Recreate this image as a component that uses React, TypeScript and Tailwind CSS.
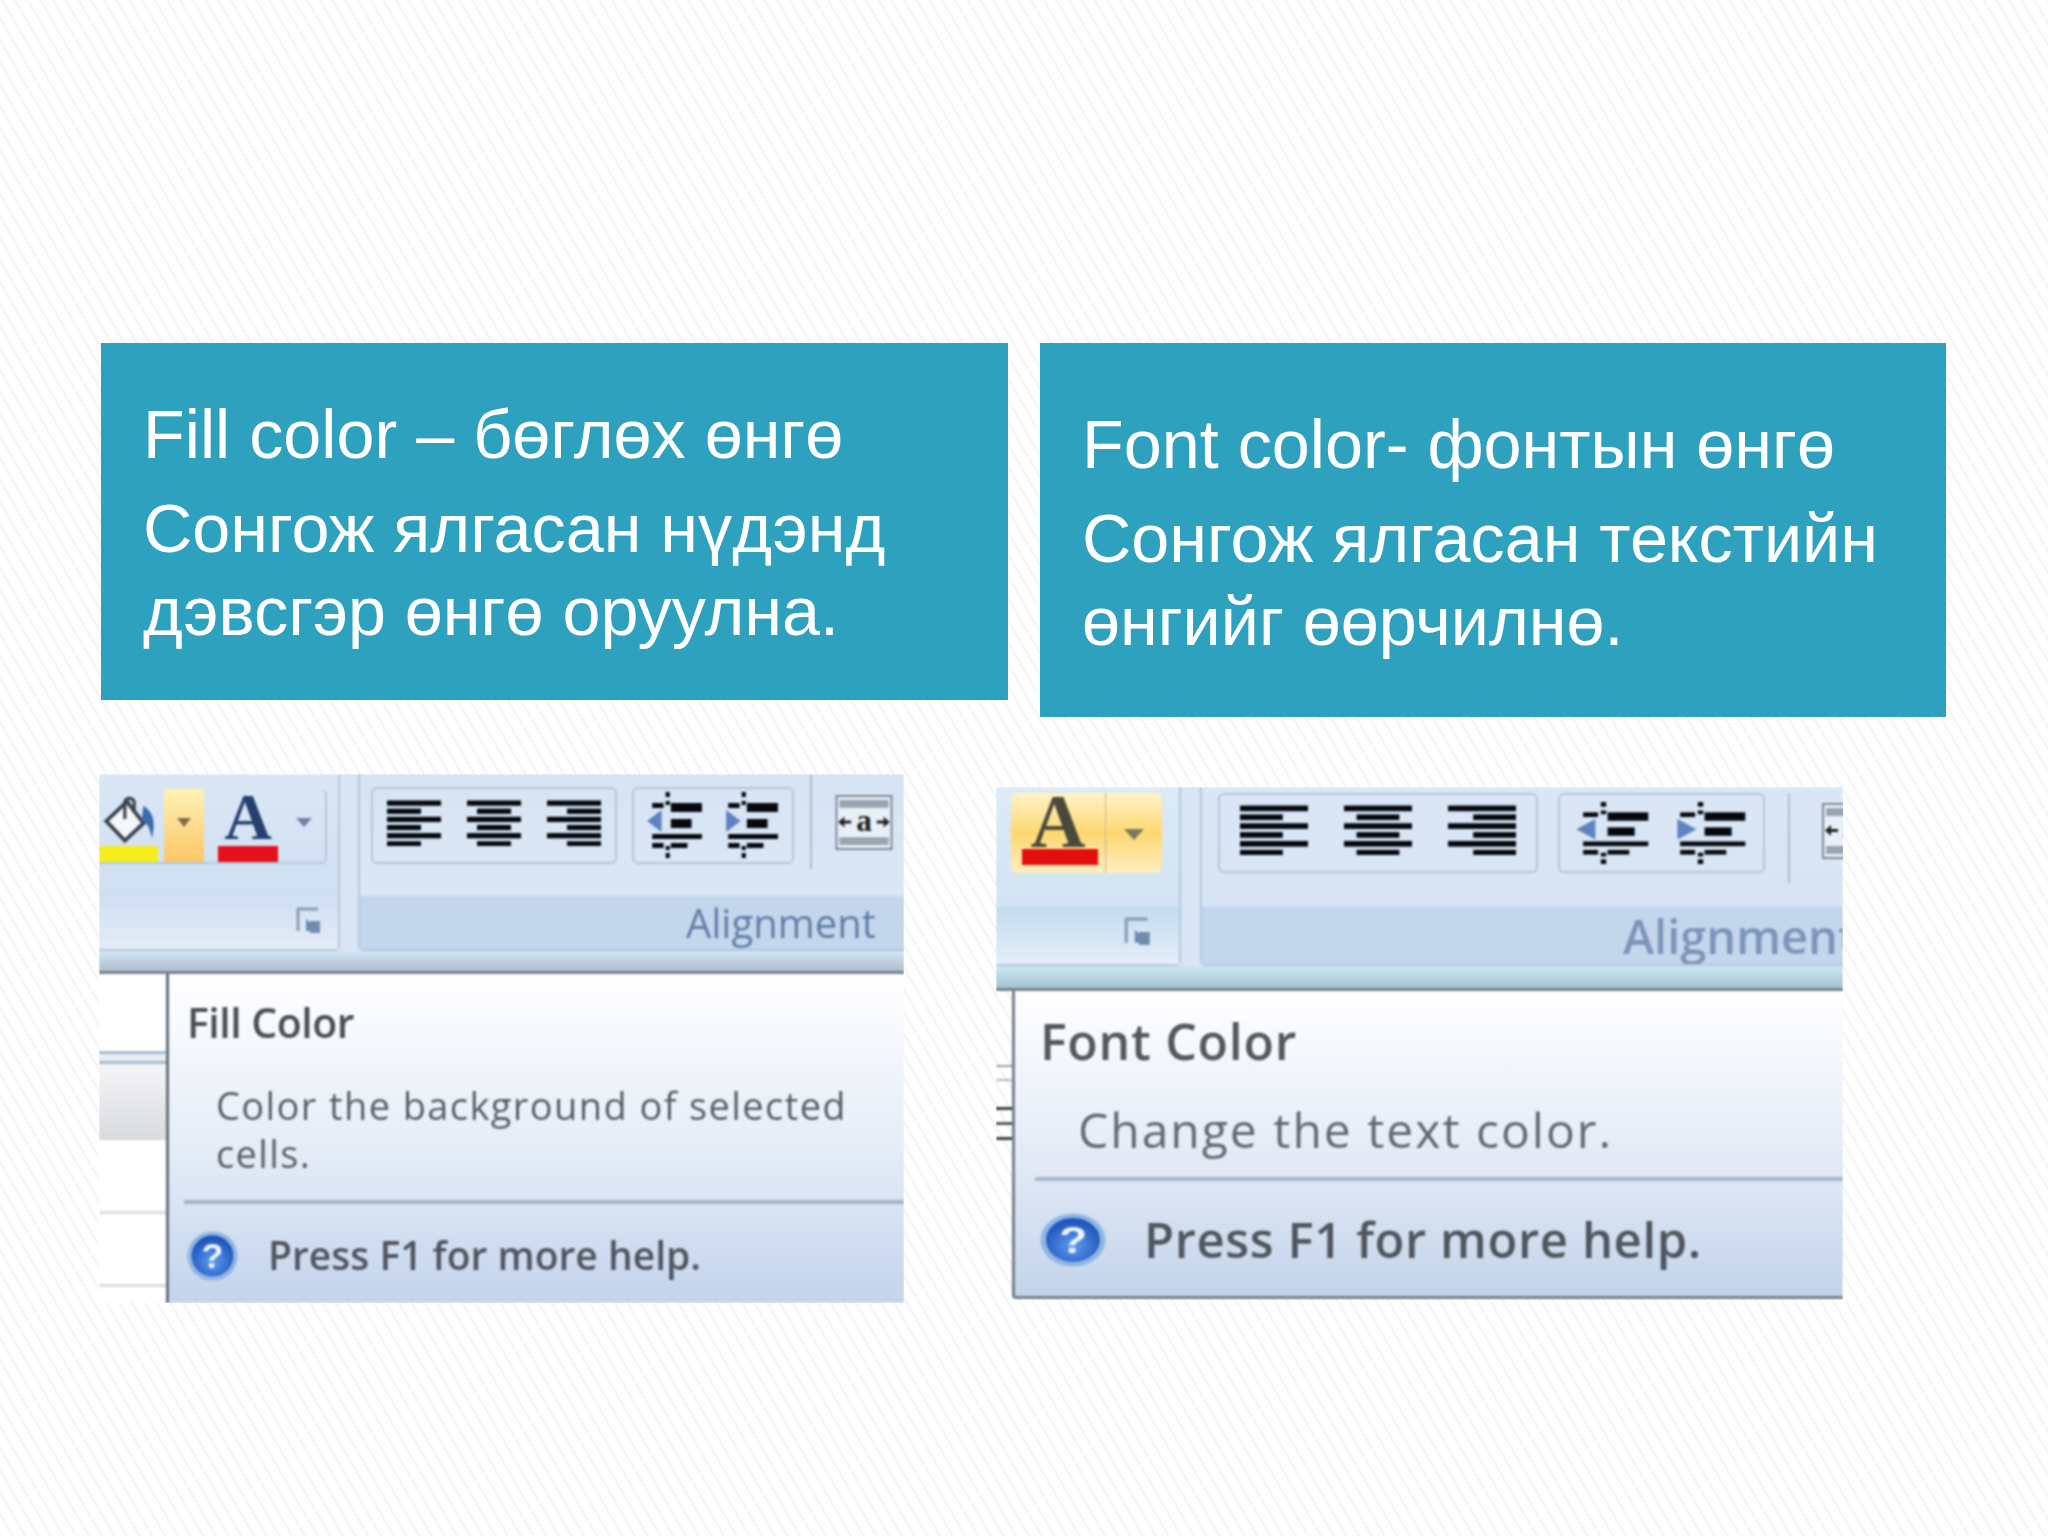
const sans = "font-['Liberation_Sans',Arial,sans-serif]";
const uiFont = "font-['Open_Sans','Noto_Sans',sans-serif]";

function AlignIcon({ kind, className }: { kind: "left" | "center" | "right"; className: string }) {
  const rows = [0, 1, 2, 3, 4, 5];
  return (
    <svg viewBox="0 0 54 48" preserveAspectRatio="none" className={className}>
      {rows.map((r) => {
        const w = r % 2 === 0 ? 54 : 34;
        const x = kind === "left" ? 0 : kind === "right" ? 54 - w : (54 - w) / 2;
        return <rect key={r} x={x} y={r * 8.5 + 0.5} width={w} height={5.5} fill="#05080f" />;
      })}
    </svg>
  );
}

function IndentIcon({ dir, className }: { dir: "in" | "out"; className: string }) {
  return (
    <svg viewBox="0 0 56 66" preserveAspectRatio="none" className={className}>
      <rect x="19" y="0" width="4" height="5" fill="#05080f" />
      <rect x="19" y="9" width="4" height="4" fill="#05080f" />
      <rect x="19" y="54" width="4" height="4" fill="#05080f" />
      <rect x="19" y="61" width="4" height="5" fill="#05080f" />
      <rect x="6" y="11" width="11" height="5" fill="#05080f" />
      <rect x="24" y="11" width="30" height="9" fill="#05080f" />
      <rect x="24" y="27" width="20" height="9" fill="#05080f" />
      <rect x="6" y="42" width="48" height="5" fill="#05080f" />
      <rect x="6" y="51" width="11" height="5" fill="#05080f" />
      <rect x="24" y="51" width="16" height="5" fill="#05080f" />
      <path d={dir === "out" ? "M1 29 L15 18 V40 Z" : "M18 29 L4 18 V40 Z"} fill="#5f83c0" />
    </svg>
  );
}

function WrapIcon({ className }: { className: string }) {
  return (
    <svg viewBox="0 0 58 56" className={className}>
      <rect x="1" y="1" width="56" height="54" fill="#e9eff7" stroke="#7e8794" strokeWidth="2" />
      <rect x="4" y="5" width="50" height="8" fill="#9aa5b2" />
      <rect x="4" y="43" width="50" height="8" fill="#9aa5b2" />
      <rect x="4" y="26" width="12" height="3" fill="#222" />
      <path d="M3 27.5 L9 22 V33 Z" fill="#222" />
      <rect x="42" y="26" width="12" height="3" fill="#222" />
      <path d="M55 27.5 L49 22 V33 Z" fill="#222" />
      <text x="29" y="37" textAnchor="middle" fontSize="32" fontWeight="700" fontFamily="Liberation Serif" fill="#222">a</text>
    </svg>
  );
}

function Launcher({ className }: { className: string }) {
  return (
    <svg viewBox="0 0 26 28" className={className}>
      <path d="M2 24 V2 H22" fill="none" stroke="#8b9db4" strokeWidth="3" />
      <path d="M10 12 L24 24 H10 Z" fill="#6f8bb0" />
      <rect x="14" y="14" width="10" height="12" fill="#6f8bb0" />
    </svg>
  );
}

function HelpIcon({ className, id }: { className: string; id: string }) {
  return (
    <svg viewBox="0 0 60 60" preserveAspectRatio="none" className={className}>
      <defs>
        <radialGradient id={id} cx="50%" cy="62%" r="60%">
          <stop offset="0%" stopColor="#5d9df0" />
          <stop offset="100%" stopColor="#1549b4" />
        </radialGradient>
      </defs>
      <circle cx="30" cy="30" r="27" fill={`url(#${id})`} stroke="#8fb6e4" strokeWidth="5" />
      <text x="30" y="45" textAnchor="middle" fontSize="42" fontWeight="700" fontFamily="Liberation Sans" fill="#eef5ff">?</text>
    </svg>
  );
}

function BucketIcon({ className }: { className: string }) {
  return (
    <svg viewBox="0 0 56 46" preserveAspectRatio="none" className={className}>
      <path d="M6 24 L26 6 L42 26 L24 42 Z" fill="#f4f6f8" stroke="#3a424d" strokeWidth="3.5" />
      <path d="M24 22 V6 a5 5 0 0 1 9 0 V16" fill="none" stroke="#3a424d" strokeWidth="3" />
      <path d="M42 10 C52 16 54 26 50 40 C48 30 46 26 40 24 Z" fill="#3a6bb0" />
    </svg>
  );
}

function FirstShot() {
  return (
    <div className="w-[805px] h-[529px] -ml-[2px] mt-[74px] overflow-hidden">
      <div className="w-full h-full flex flex-col blur-[1px]">
        <div className="h-[200px] flex flex-col bg-[#d7e5f4]">
          <div className="h-[177px] flex gap-[18px]">
            <div className="w-[241px] shrink-0 flex flex-col border-r-2 border-b-2 border-[#b4c8de] rounded-br-md">
              <div className="h-[122px] shrink-0 pt-[15px] flex bg-gradient-to-b from-[#dbe7f5] to-[#cfdff1]">
                <div className="h-[75px] w-[228px] flex rounded-r-md border-r-2 border-b-2 border-[#b6c5d8]">
                  <div className="w-[59px] flex flex-col justify-end">
                    <BucketIcon className="w-[58px] h-[50px] ml-[1px] mb-[1px]" />
                    <div className="h-[16px] bg-[#f6ee1c]" />
                  </div>
                  <div className="w-[40px] ml-[6px] flex items-center justify-center bg-gradient-to-b from-[#fdf3b4] to-[#fbc765]">
                    <div className="w-0 h-0 mb-[6px] border-x-[7px] border-t-[9px] border-x-transparent border-t-[#7f6a48]" />
                  </div>
                  <div className="flex-1 ml-[4px] flex items-start">
                    <div className="w-[60px] ml-[10px] flex flex-col items-center">
                      <span className="text-[66px] leading-[56px] font-bold font-['Liberation_Serif',serif] text-[#24406f]">A</span>
                      <div className="w-[60px] h-[16px] mt-[1px] bg-[#e3101d]" />
                    </div>
                    <div className="w-0 h-0 ml-[18px] mt-[29px] border-x-[8px] border-t-[9px] border-x-transparent border-t-[#6f82a0]" />
                  </div>
                </div>
              </div>
              <div className="flex-1 flex justify-end items-start pt-[11px] pr-[16px] bg-gradient-to-b from-[#cfdff1] to-[#e4edf8]">
                <Launcher className="w-[26px] h-[28px]" />
              </div>
            </div>
            <div className="flex-1 min-w-0 flex flex-col border-l-2 border-b-2 border-[#b4c8de] rounded-bl-md">
              <div className="h-[122px] shrink-0 pl-[11px] pt-[13px] flex items-start bg-gradient-to-b from-[#d6e4f4] to-[#dbe7f6]">
                <div className="w-[246px] shrink-0 h-[77px] flex items-center justify-between px-[14px] pb-[6px] rounded-md border-2 border-[#b7c4d6]">
                  <AlignIcon kind="left" className="w-[54px] h-[46px]" />
                  <AlignIcon kind="center" className="w-[54px] h-[46px]" />
                  <AlignIcon kind="right" className="w-[54px] h-[46px]" />
                </div>
                <div className="w-[162px] shrink-0 h-[77px] ml-[15px] flex items-center justify-between px-[12px] pb-[2px] rounded-md border-2 border-[#b7c4d6]">
                  <IndentIcon dir="out" className="w-[58px] h-[66px]" />
                  <IndentIcon dir="in" className="w-[58px] h-[66px]" />
                </div>
                <div className="w-[2px] h-[95px] ml-[16px] -mt-[13px] bg-[#aebccd]" />
                <WrapIcon className="w-[58px] h-[55px] ml-[23px] mt-[8px]" />
              </div>
              <div className={`flex-1 flex justify-end items-center pr-[28px] bg-[#c3d6ec] ${uiFont}`}>
                <span className="text-[40px] leading-[48px] text-[#637ea6]">Alignment</span>
              </div>
            </div>
          </div>
          <div className="flex-1 bg-gradient-to-b from-[#d3e6f4] to-[#adbfcf] border-b-[3px] border-[#78848e]" />
        </div>
        <div className="flex-1 flex">
          <div className="w-[67px] flex flex-col bg-white">
            <div className="h-[77px]" />
            <div className="h-[13px] border-y-[3px] border-[#a8bccf] bg-[#e6eef6]" />
            <div className="h-[76px] bg-gradient-to-b from-[#f6f6f8] to-[#d9dbe0] border-b-2 border-[#d4d6da]" />
            <div className="h-[74px] border-b-[3px] border-[#dcdcdc]" />
            <div className="h-[73px] border-b-[3px] border-[#dcdcdc]" />
          </div>
          <div className={`flex-1 flex flex-col border-l-[3px] border-[#66727d] bg-gradient-to-b from-white via-[#e7eef8] to-[#c3d4eb] ${uiFont}`}>
            <div className="h-[226px] pl-[18px] pt-[23px] flex flex-col">
              <span className="text-[41px] leading-[50px] font-semibold tracking-[-0.5px] text-[#4c4f54]">Fill Color</span>
              <p className="text-[38px] leading-[48px] mt-[34px] ml-[29px] text-[#5b6068] tracking-[1.4px] whitespace-nowrap">
                Color the background of selected
                <br />
                cells.
              </p>
            </div>
            <div className="h-[4px] ml-[15px] bg-[#a4b6cb]" />
            <div className="flex-1 flex items-center pl-[18px] pt-[4px]">
              <HelpIcon id="helpA" className="w-[51px] h-[50px]" />
              <span className="ml-[30px] text-[39px] font-semibold text-[#50565f]">Press F1 for more help.</span>
            </div>
          </div>
        </div>
      </div>
    </div>
  );
}

function SecondShot() {
  return (
    <div className="w-[847px] h-[513px] -ml-[44px] mt-[70px] overflow-hidden">
      <div className="w-full h-full flex flex-col blur-[1px]">
        <div className="h-[204px] flex flex-col bg-[#d7e5f4]">
          <div className="h-[179px] flex gap-[19px]">
            <div className="w-[185px] shrink-0 flex flex-col border-r-2 border-b-2 border-[#b4c8de] rounded-br-md">
              <div className="h-[120px] shrink-0 pl-[15px] pt-[6px] bg-gradient-to-b from-[#dcebf7] to-[#d3e3f3]">
                <div className="w-[151px] h-[80px] flex rounded-md bg-gradient-to-b from-[#fff4c6] via-[#fdd86e] to-[#fdeec0]">
                  <div className="w-[95px] flex flex-col items-center border-r border-[#c6b98e]">
                    <span className="text-[76px] leading-[56px] font-bold font-['Liberation_Serif',serif] text-[#4a4a3c]">A</span>
                    <div className="w-[76px] h-[16px] ml-[3px] bg-[#e30d0d]" />
                  </div>
                  <div className="flex-1 flex justify-center pt-[36px]">
                    <div className="w-0 h-0 border-x-[10px] border-t-[11px] border-x-transparent border-t-[#7e7664]" />
                  </div>
                </div>
              </div>
              <div className="flex-1 flex justify-end items-start pt-[10px] pr-[24px] bg-gradient-to-b from-[#c4dcf0] to-[#e4eff9]">
                <Launcher className="w-[34px] h-[30px]" />
              </div>
            </div>
            <div className="flex-1 min-w-0 flex flex-col border-l-2 border-b-2 border-[#b4c8de] rounded-bl-md">
              <div className="h-[120px] shrink-0 pl-[16px] pt-[6px] flex items-start bg-gradient-to-b from-[#dbe7f6] to-[#d7e4f4]">
                <div className="w-[320px] shrink-0 h-[80px] flex items-center justify-between px-[20px] pb-[6px] rounded-md border-2 border-[#b7c4d6]">
                  <AlignIcon kind="left" className="w-[68px] h-[50px]" />
                  <AlignIcon kind="center" className="w-[68px] h-[50px]" />
                  <AlignIcon kind="right" className="w-[68px] h-[50px]" />
                </div>
                <div className="w-[207px] shrink-0 h-[80px] ml-[20px] flex items-center justify-between px-[15px] rounded-md border-2 border-[#b7c4d6]">
                  <IndentIcon dir="out" className="w-[76px] h-[62px]" />
                  <IndentIcon dir="in" className="w-[76px] h-[62px]" />
                </div>
                <div className="w-[2px] h-[90px] shrink-0 ml-[23px] bg-[#aebccd]" />
                <WrapIcon className="w-[58px] h-[60px] ml-[32px] mt-[8px] shrink-0" />
              </div>
              <div className={`flex-1 flex items-center pl-[421px] overflow-hidden bg-[#c3d6ec] ${uiFont}`}>
                <span className="text-[47px] leading-[56px] font-semibold whitespace-nowrap text-[#7d95b8]">Alignment</span>
              </div>
            </div>
          </div>
          <div className="flex-1 bg-gradient-to-b from-[#c9e8f2] to-[#a8c3d4] border-b-[3px] border-[#78848f]" />
        </div>
        <div className="h-[308px] flex">
          <div className="w-[16px] pt-[74px] flex flex-col gap-[12px]">
            <div className="h-[2px] bg-[#9aa0a8]" />
            <div className="h-[2px] bg-[#b4b8be]" />
            <div className="h-[3px] mt-[14px] bg-[#3c4048]" />
            <div className="h-[3px] bg-[#55595f]" />
            <div className="h-[3px] bg-[#3c4048]" />
          </div>
          <div className={`flex-1 flex flex-col border-l-[3px] border-b-[3px] border-[#75808e] rounded-bl-sm bg-gradient-to-b from-white via-[#e6edf8] to-[#c3d4ea] ${uiFont}`}>
            <div className="h-[186px] pl-[25px] pt-[22px] flex flex-col">
              <span className="text-[50px] leading-[56px] font-semibold text-[#55585c] tracking-[0.7px]">Font Color</span>
              <p className="text-[48px] leading-[56px] mt-[33px] ml-[38px] text-[#646a72] tracking-[2px] whitespace-nowrap">Change the text color.</p>
            </div>
            <div className="h-[4px] ml-[20px] bg-[#a5b7cd]" />
            <div className="flex-1 flex items-center pl-[25px] pt-[2px]">
              <HelpIcon id="helpB" className="w-[66px] h-[54px]" />
              <span className="ml-[38px] text-[49px] font-semibold text-[#50565f] tracking-[0.6px] whitespace-nowrap">Press F1 for more help.</span>
            </div>
          </div>
        </div>
      </div>
    </div>
  );
}

function Card({ lines, height, top }: { lines: string[]; height: string; top: string }) {
  return (
    <div className={`${height} ${top} px-[42px] bg-[#2ea1bf] text-white text-[68.3px] leading-[83px] ${sans}`}>
      <p className="mb-[11px]">{lines[0]}</p>
      <p>
        {lines[1]}
        <br />
        {lines[2]}
      </p>
    </div>
  );
}

export default function App() {
  return (
    <div className="w-[2048px] h-[1536px] pt-[343px] flex items-start bg-[repeating-linear-gradient(60deg,#f3f3f3_0px,#ffffff_2px,#ffffff_9px,#f3f3f3_11px)]">
      <div className="w-[907px] ml-[101px]">
        <Card
          height="h-[357px]"
          top="pt-[50px]"
          lines={["Fill color – бөглөх өнгө", "Сонгож ялгасан нүдэнд", "дэвсгэр өнгө оруулна."]}
        />
        <FirstShot />
      </div>
      <div className="w-[906px] ml-[32px]">
        <Card
          height="h-[374px]"
          top="pt-[60px]"
          lines={["Font color- фонтын өнгө", "Сонгож ялгасан текстийн", "өнгийг өөрчилнө."]}
        />
        <SecondShot />
      </div>
    </div>
  );
}
